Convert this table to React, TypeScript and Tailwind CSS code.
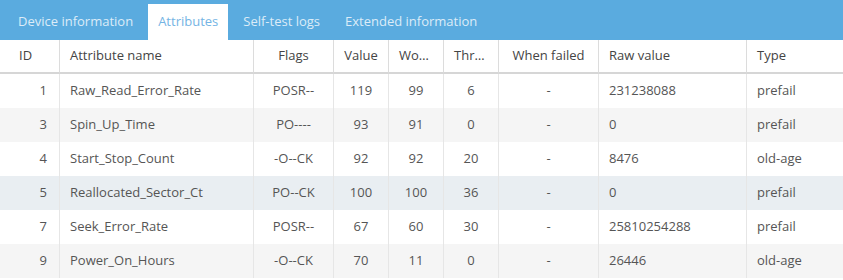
import React from "react";

type Attr = {
  id: number;
  name: string;
  flags: string;
  value: number;
  worst: number;
  thresh: number;
  failed: string;
  raw: string;
  type: string;
};

const rows: Attr[] = [
  { id: 1, name: "Raw_Read_Error_Rate", flags: "POSR--", value: 119, worst: 99, thresh: 6, failed: "-", raw: "231238088", type: "prefail" },
  { id: 3, name: "Spin_Up_Time", flags: "PO----", value: 93, worst: 91, thresh: 0, failed: "-", raw: "0", type: "prefail" },
  { id: 4, name: "Start_Stop_Count", flags: "-O--CK", value: 92, worst: 92, thresh: 20, failed: "-", raw: "8476", type: "old-age" },
  { id: 5, name: "Reallocated_Sector_Ct", flags: "PO--CK", value: 100, worst: 100, thresh: 36, failed: "-", raw: "0", type: "prefail" },
  { id: 7, name: "Seek_Error_Rate", flags: "POSR--", value: 67, worst: 60, thresh: 30, failed: "-", raw: "25810254288", type: "prefail" },
  { id: 9, name: "Power_On_Hours", flags: "-O--CK", value: 70, worst: 11, thresh: 0, failed: "-", raw: "26446", type: "old-age" },
];

const tabs = ["Device information", "Attributes", "Self-test logs", "Extended information"];

function App() {
  const active = 1;
  const hovered = 3;

  return (
    <div
      className="w-[843px] h-[280px] overflow-hidden bg-white text-[13px] text-[#555]"
      style={{ fontFamily: '"Open Sans", sans-serif' }}
    >
      <div className="flex items-end gap-[5px] h-10 pl-2 bg-[#5aabdf]">
        {tabs.map((t, i) => (
          <div
            key={t}
            className={
              i === active
                ? "h-9 px-2.5 flex items-center text-[13px] bg-white text-[#74b4e4]"
                : "h-9 px-2.5 flex items-center text-[13px] text-[#dcecf8]"
            }
          >
            {t}
          </div>
        ))}
      </div>

      <table className="w-full table-fixed border-separate border-spacing-0">
        <thead>
          <tr className="h-[34px] text-[#444]">
            <th className="w-[60px] font-normal text-left pl-[19px] border-r border-b-2 border-r-[#dcdcdc] border-b-[#d6d6d6]">ID</th>
            <th className="w-[194px] font-normal text-left pl-2.5 border-r border-b-2 border-r-[#dcdcdc] border-b-[#d6d6d6]">Attribute name</th>
            <th className="w-[80px] font-normal text-center border-r border-b-2 border-r-[#dcdcdc] border-b-[#d6d6d6]">Flags</th>
            <th className="w-[55px] font-normal text-center border-r border-b-2 border-r-[#dcdcdc] border-b-[#d6d6d6]">Value</th>
            <th className="w-[55px] font-normal text-left pl-2.5 pr-3 truncate border-r border-b-2 border-r-[#dcdcdc] border-b-[#d6d6d6]">Worst</th>
            <th className="w-[55px] font-normal text-left pl-2.5 pr-3 truncate border-r border-b-2 border-r-[#dcdcdc] border-b-[#d6d6d6]">Threshold</th>
            <th className="w-[100px] font-normal text-center border-r border-b-2 border-r-[#dcdcdc] border-b-[#d6d6d6]">When failed</th>
            <th className="w-[148px] font-normal text-left pl-2.5 border-r border-b-2 border-r-[#dcdcdc] border-b-[#d6d6d6]">Raw value</th>
            <th className="font-normal text-left pl-2.5 border-b-2 border-b-[#d6d6d6]">Type</th>
          </tr>
        </thead>
        <tbody>
          {rows.map((r, i) => (
            <tr
              key={r.id}
              className={
                i === hovered
                  ? "h-[34px] bg-[#e9eef2]"
                  : i % 2 === 1
                  ? "h-[34px] bg-[#f5f5f5]"
                  : "h-[34px] bg-white"
              }
            >
              <td className="text-right pr-3 border-r border-[#e6e6e6]">{r.id}</td>
              <td className="pl-2.5 border-r border-[#e6e6e6]">{r.name}</td>
              <td className="text-center border-r border-[#e6e6e6]">{r.flags}</td>
              <td className="text-center border-r border-[#e6e6e6]">{r.value}</td>
              <td className="text-center border-r border-[#e6e6e6]">{r.worst}</td>
              <td className="text-center border-r border-[#e6e6e6]">{r.thresh}</td>
              <td className="text-center border-r border-[#e6e6e6]">{r.failed}</td>
              <td className="pl-2.5 border-r border-[#e6e6e6]">{r.raw}</td>
              <td className="pl-2.5">{r.type}</td>
            </tr>
          ))}
        </tbody>
      </table>
    </div>
  );
}

export default App;
